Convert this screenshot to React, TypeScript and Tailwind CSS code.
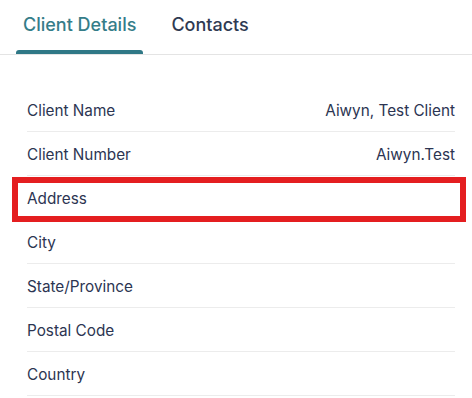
import React from 'react';

const rows = [
  { label: 'Client Name', value: 'Aiwyn, Test Client' },
  { label: 'Client Number', value: 'Aiwyn.Test' },
  { label: 'Address', value: '', highlight: true },
  { label: 'City', value: '' },
  { label: 'State/Province', value: '' },
  { label: 'Postal Code', value: '' },
  { label: 'Country', value: '' },
];

export default function App() {
  return (
    <div className="w-[472px] h-[398px] bg-white overflow-hidden" style={{ fontFamily: 'Inter, "Noto Sans", sans-serif' }}>
      {/* Tabs */}
      <div className="flex items-end gap-[28px] pl-[16px] h-[55px] border-b border-[#e4e4e4]">
        <button className="relative h-full px-[7px] text-[18px] font-medium text-[#357d89] flex items-center pb-[5px]">
          Client Details
          <span className="absolute left-0 right-0 bottom-0 h-[4px] rounded-t-[3px] bg-[#2f7886]" />
        </button>
        <button className="h-full text-[18px] font-medium text-[#2f3a52] flex items-center pb-[5px]">
          Contacts
        </button>
      </div>

      {/* Detail rows */}
      <div className="pt-[33px] pl-[27px] pr-[17px]">
        {rows.map((row) => (
          <div
            key={row.label}
            className="relative flex items-center justify-between h-[44px] pt-[4px] border-b border-[#ececec] text-[15.3px] text-[#2c3552]"
          >
            <span>{row.label}</span>
            <span>{row.value}</span>
            {row.highlight && (
              <span className="absolute -left-[15px] -right-[11px] top-[1px] -bottom-[3px] border-[6px] border-[#e41e20]" />
            )}
          </div>
        ))}
      </div>
    </div>
  );
}
